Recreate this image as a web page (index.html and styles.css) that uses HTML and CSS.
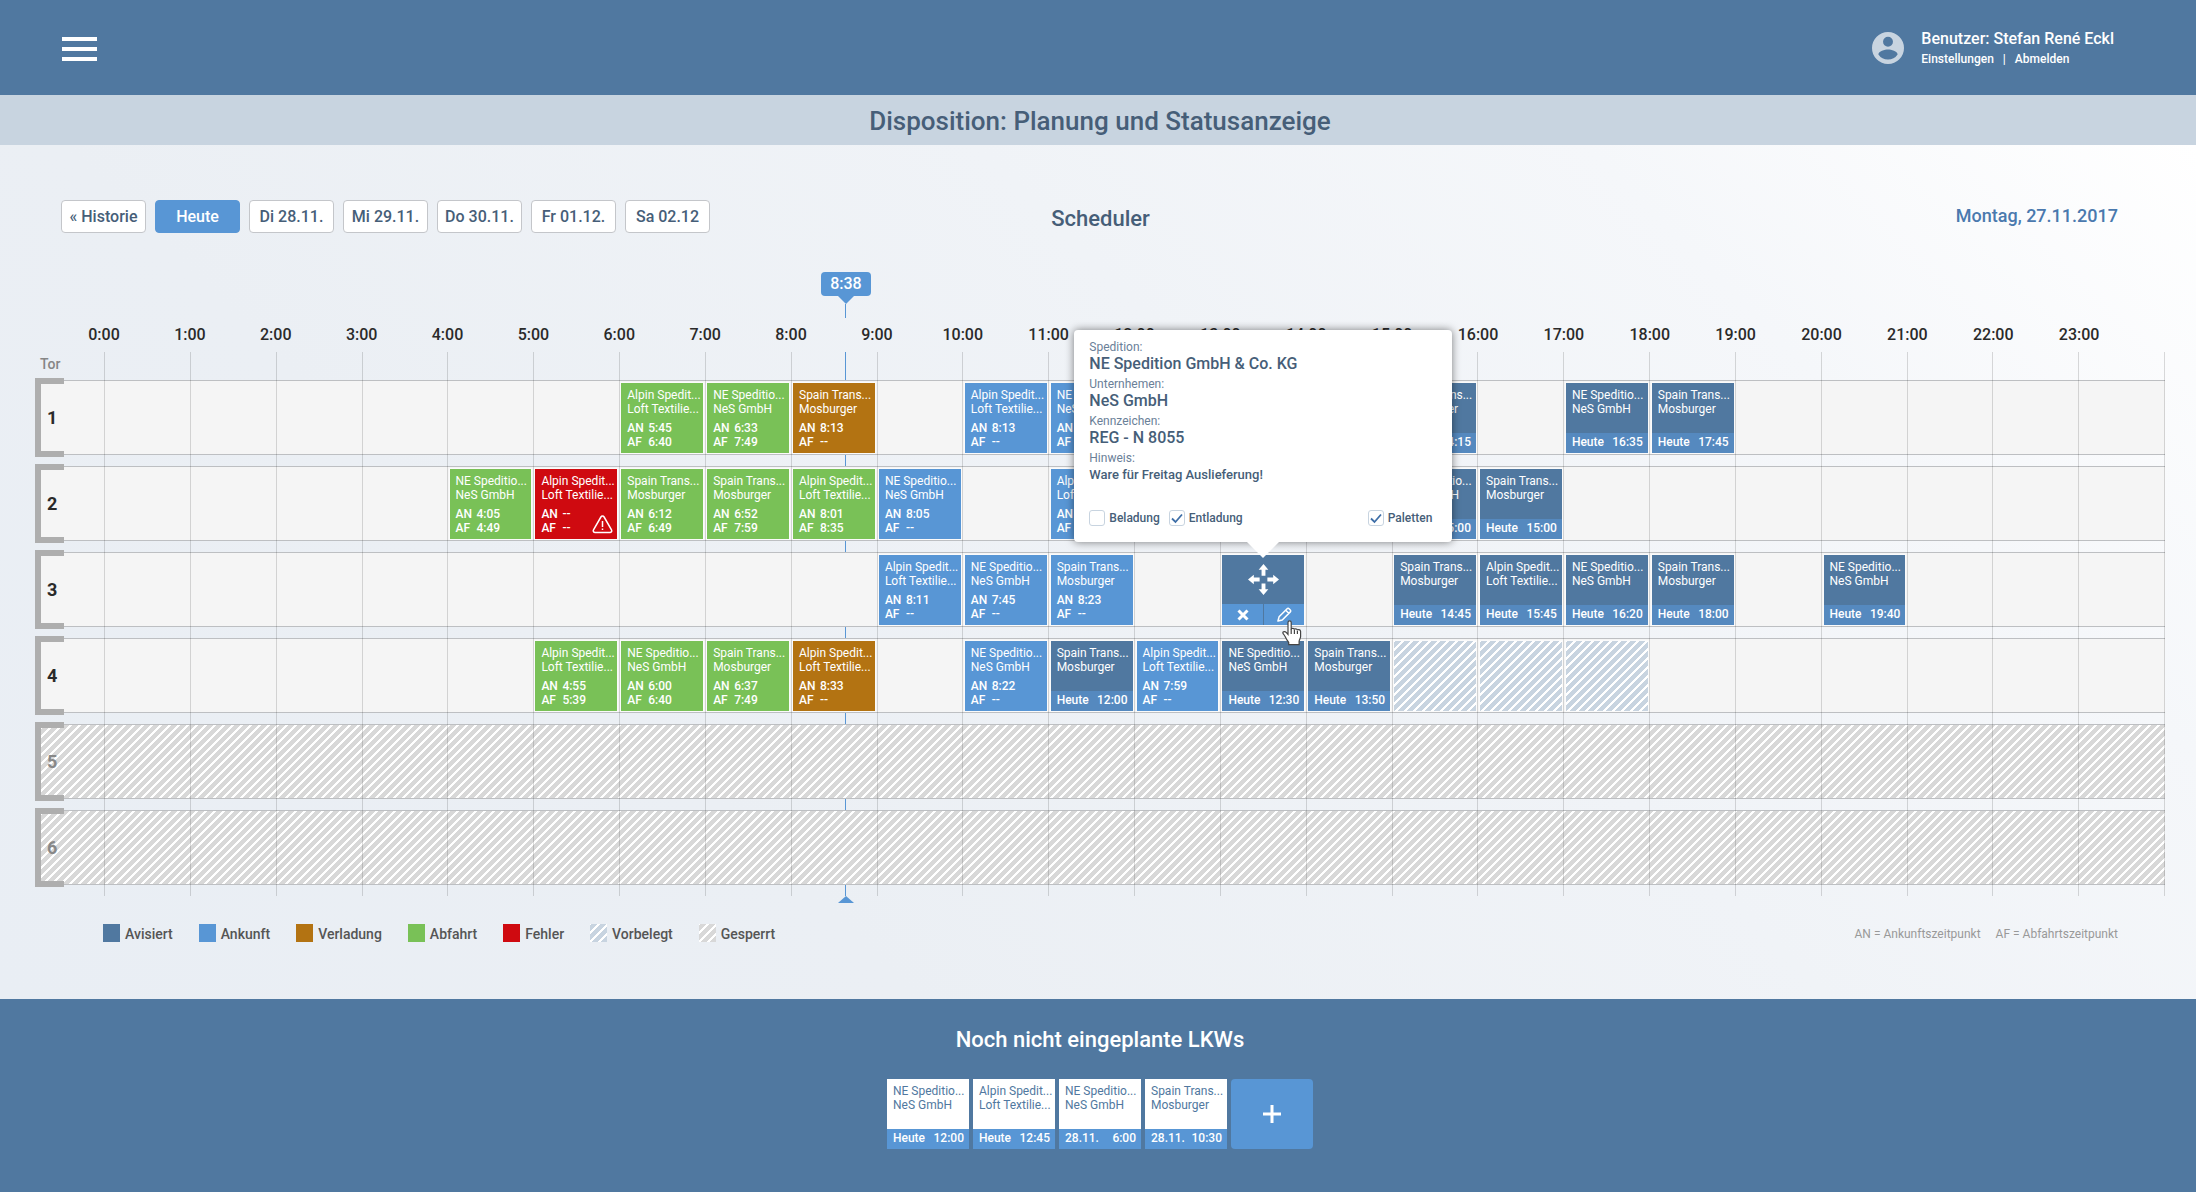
FILE: index.html
```html
<!DOCTYPE html>
<html lang="de">
<head>
<meta charset="utf-8">
<title>Disposition: Planung und Statusanzeige</title>
<meta name="viewport" content="width=device-width, initial-scale=1">
<link rel="stylesheet" href="styles.css">
</head>
<body>
<header class="topbar">
  <button class="menu" type="button" aria-label="Menü"><span></span><span></span><span></span></button>
  <div class="user">
    <svg class="user-icon" viewBox="2 2 20 20" aria-hidden="true"><path fill-rule="evenodd" d="M12 2a10 10 0 1 0 0 20 10 10 0 0 0 0-20zm0 3a3.1 3.1 0 1 1 0 6.200 3.100 3.100 0 0 1 0-6.200zm0 14.200a7.200 7.200 0 0 1-6-3.200c.03-1.990 4-3.080 6-3.080s5.970 1.090 6 3.080a7.200 7.200 0 0 1-6 3.200z"/></svg>
    <div>
      <p class="user-name">Benutzer: Stefan René Eckl</p>
      <p class="user-links"><a href="#einstellungen">Einstellungen</a><span>|</span><a href="#abmelden">Abmelden</a></p>
    </div>
  </div>
</header>

<div class="titlebar"><h1>Disposition: Planung und Statusanzeige</h1></div>

<main>
  <div class="toolbar">
    <nav class="days" aria-label="Tage">
      <button type="button">« Historie</button>
      <button type="button" class="active">Heute</button>
      <button type="button">Di 28.11.</button>
      <button type="button">Mi 29.11.</button>
      <button type="button">Do 30.11.</button>
      <button type="button">Fr 01.12.</button>
      <button type="button">Sa 02.12</button>
    </nav>
    <h2>Scheduler</h2>
    <p class="date">Montag, 27.11.2017</p>
  </div>

  <section class="board">
    <div class="hours">
      <span>0:00</span><span>1:00</span><span>2:00</span><span>3:00</span><span>4:00</span><span>5:00</span><span>6:00</span><span>7:00</span><span>8:00</span><span>9:00</span><span>10:00</span><span>11:00</span><span>12:00</span><span>13:00</span><span>14:00</span><span>15:00</span><span>16:00</span><span>17:00</span><span>18:00</span><span>19:00</span><span>20:00</span><span>21:00</span><span>22:00</span><span>23:00</span>
    </div>
    <p class="gate-head">Tor</p>
    <div class="lines" aria-hidden="true"><i></i><i></i><i></i><i></i><i></i><i></i><i></i><i></i><i></i><i></i><i></i><i></i><i></i><i></i><i></i><i></i><i></i><i></i><i></i><i></i><i></i><i></i><i></i><i></i></div>
    <div class="track">
      <div class="now" style="left: 36%"><b>8:38</b><i class="down"></i><i class="stem"></i><i class="shaft"></i><i class="up"></i></div>
    </div>

    <div class="lanes">
      <div class="lane">
        <strong class="gate">1</strong>
        <div class="slots">
          <article class="card left" style="--h:6"><p>Alpin Spedit...</p><p>Loft Textilie...</p><dl><dt>AN</dt><dd>5:45</dd><dt>AF</dt><dd>6:40</dd></dl></article>
          <article class="card left" style="--h:7"><p>NE Speditio...</p><p>NeS GmbH</p><dl><dt>AN</dt><dd>6:33</dd><dt>AF</dt><dd>7:49</dd></dl></article>
          <article class="card loading" style="--h:8"><p>Spain Trans...</p><p>Mosburger</p><dl><dt>AN</dt><dd>8:13</dd><dt>AF</dt><dd>--</dd></dl></article>
          <article class="card arrived" style="--h:10"><p>Alpin Spedit...</p><p>Loft Textilie...</p><dl><dt>AN</dt><dd>8:13</dd><dt>AF</dt><dd>--</dd></dl></article>
          <article class="card arrived" style="--h:11"><p>NE Speditio...</p><p>NeS GmbH</p><dl><dt>AN</dt><dd>8:20</dd><dt>AF</dt><dd>--</dd></dl></article>
          <article class="card" style="--h:15"><p>Spain Trans...</p><p>Mosburger</p><footer><span>Heute</span><span>14:15</span></footer></article>
          <article class="card" style="--h:17"><p>NE Speditio...</p><p>NeS GmbH</p><footer><span>Heute</span><span>16:35</span></footer></article>
          <article class="card" style="--h:18"><p>Spain Trans...</p><p>Mosburger</p><footer><span>Heute</span><span>17:45</span></footer></article>
        </div>
      </div>

      <div class="lane">
        <strong class="gate">2</strong>
        <div class="slots">
          <article class="card left" style="--h:4"><p>NE Speditio...</p><p>NeS GmbH</p><dl><dt>AN</dt><dd>4:05</dd><dt>AF</dt><dd>4:49</dd></dl></article>
          <article class="card error" style="--h:5"><p>Alpin Spedit...</p><p>Loft Textilie...</p><dl><dt>AN</dt><dd>--</dd><dt>AF</dt><dd>--</dd></dl>
            <svg class="warn" viewBox="0 0 21 19" aria-label="Fehler"><path d="M8.900 2a1.900 1.900 0 0 1 3.200 0l7.400 12.800c.8 1.400-.1 2.700-1.600 2.700H3.100c-1.500 0-2.400-1.300-1.600-2.700z"/><path d="M10.500 6v6M10.500 13.400v1.600"/></svg></article>
          <article class="card left" style="--h:6"><p>Spain Trans...</p><p>Mosburger</p><dl><dt>AN</dt><dd>6:12</dd><dt>AF</dt><dd>6:49</dd></dl></article>
          <article class="card left" style="--h:7"><p>Spain Trans...</p><p>Mosburger</p><dl><dt>AN</dt><dd>6:52</dd><dt>AF</dt><dd>7:59</dd></dl></article>
          <article class="card left" style="--h:8"><p>Alpin Spedit...</p><p>Loft Textilie...</p><dl><dt>AN</dt><dd>8:01</dd><dt>AF</dt><dd>8:35</dd></dl></article>
          <article class="card arrived" style="--h:9"><p>NE Speditio...</p><p>NeS GmbH</p><dl><dt>AN</dt><dd>8:05</dd><dt>AF</dt><dd>--</dd></dl></article>
          <article class="card arrived" style="--h:11"><p>Alpin Spedit...</p><p>Loft Textilie...</p><dl><dt>AN</dt><dd>8:10</dd><dt>AF</dt><dd>--</dd></dl></article>
          <article class="card" style="--h:15"><p>NE Speditio...</p><p>NeS GmbH</p><footer><span>Heute</span><span>15:00</span></footer></article>
          <article class="card" style="--h:16"><p>Spain Trans...</p><p>Mosburger</p><footer><span>Heute</span><span>15:00</span></footer></article>
        </div>
      </div>

      <div class="lane">
        <strong class="gate">3</strong>
        <div class="slots">
          <article class="card arrived" style="--h:9"><p>Alpin Spedit...</p><p>Loft Textilie...</p><dl><dt>AN</dt><dd>8:11</dd><dt>AF</dt><dd>--</dd></dl></article>
          <article class="card arrived" style="--h:10"><p>NE Speditio...</p><p>NeS GmbH</p><dl><dt>AN</dt><dd>7:45</dd><dt>AF</dt><dd>--</dd></dl></article>
          <article class="card arrived" style="--h:11"><p>Spain Trans...</p><p>Mosburger</p><dl><dt>AN</dt><dd>8:23</dd><dt>AF</dt><dd>--</dd></dl></article>
          <article class="card selected" style="--h:13">
            <button class="move" type="button" aria-label="Verschieben"><svg viewBox="0 0 32 32"><path d="M16 0l5 6h-3v6h-4V6h-3zM16 32l5-6h-3v-6h-4v6h-3zM0 16l6-5v3h6v4H6v3zM32 16l-6-5v3h-6v4h6v3z"/></svg></button>
            <div class="actions">
              <button type="button" aria-label="Löschen"><svg class="cross" viewBox="0 0 12 12"><path d="M1.500 1.500l9 9M10.500 1.500l-9 9"/></svg></button>
              <button type="button" aria-label="Bearbeiten"><svg class="pencil" viewBox="0 0 16 16"><path d="M1 15l1.200-4.500 8.600-8.700a1.400 1.400 0 0 1 2 0l1.400 1.400a1.400 1.400 0 0 1 0 2L5.600 13.800zM9.300 3.400l3.300 3.300"/></svg></button>
            </div>
            <svg class="cursor" viewBox="0 0 21 26" aria-hidden="true"><path d="M6 2.500C6 .3 9.200.3 9.200 2.500v7c0-1.600 3.200-1.600 3.200.3 0-1.400 3-1.200 3 .7 0-1.300 3.200-1.300 3.200 1v5.200c0 1.600-1.500 3-1.500 4.800v3.200H6.700v-2.200c-1.400-1.700-2.700-4-4-6.700-.4-1-1.900-1.800-1.900-3 0-1.500 2.300-1.700 3.400-.4L6 14.500z"/><path d="M9.200 9v5M12.400 10v4M15.400 11v3"/></svg>
            <form class="popover">
              <dl>
                <dt>Spedition:</dt><dd>NE Spedition GmbH &amp; Co. KG</dd>
                <dt>Unternhemen:</dt><dd>NeS GmbH</dd>
                <dt>Kennzeichen:</dt><dd>REG - N 8055</dd>
                <dt>Hinweis:</dt><dd class="note">Ware für Freitag Auslieferung!</dd>
              </dl>
              <div class="checks">
                <label><input type="checkbox">Beladung</label>
                <label><input type="checkbox" checked>Entladung</label>
                <label class="end"><input type="checkbox" checked>Paletten</label>
              </div>
            </form>
          </article>
          <article class="card" style="--h:15"><p>Spain Trans...</p><p>Mosburger</p><footer><span>Heute</span><span>14:45</span></footer></article>
          <article class="card" style="--h:16"><p>Alpin Spedit...</p><p>Loft Textilie...</p><footer><span>Heute</span><span>15:45</span></footer></article>
          <article class="card" style="--h:17"><p>NE Speditio...</p><p>NeS GmbH</p><footer><span>Heute</span><span>16:20</span></footer></article>
          <article class="card" style="--h:18"><p>Spain Trans...</p><p>Mosburger</p><footer><span>Heute</span><span>18:00</span></footer></article>
          <article class="card" style="--h:20"><p>NE Speditio...</p><p>NeS GmbH</p><footer><span>Heute</span><span>19:40</span></footer></article>
        </div>
      </div>

      <div class="lane">
        <strong class="gate">4</strong>
        <div class="slots">
          <article class="card left" style="--h:5"><p>Alpin Spedit...</p><p>Loft Textilie...</p><dl><dt>AN</dt><dd>4:55</dd><dt>AF</dt><dd>5:39</dd></dl></article>
          <article class="card left" style="--h:6"><p>NE Speditio...</p><p>NeS GmbH</p><dl><dt>AN</dt><dd>6:00</dd><dt>AF</dt><dd>6:40</dd></dl></article>
          <article class="card left" style="--h:7"><p>Spain Trans...</p><p>Mosburger</p><dl><dt>AN</dt><dd>6:37</dd><dt>AF</dt><dd>7:49</dd></dl></article>
          <article class="card loading" style="--h:8"><p>Alpin Spedit...</p><p>Loft Textilie...</p><dl><dt>AN</dt><dd>8:33</dd><dt>AF</dt><dd>--</dd></dl></article>
          <article class="card arrived" style="--h:10"><p>NE Speditio...</p><p>NeS GmbH</p><dl><dt>AN</dt><dd>8:22</dd><dt>AF</dt><dd>--</dd></dl></article>
          <article class="card" style="--h:11"><p>Spain Trans...</p><p>Mosburger</p><footer><span>Heute</span><span>12:00</span></footer></article>
          <article class="card arrived" style="--h:12"><p>Alpin Spedit...</p><p>Loft Textilie...</p><dl><dt>AN</dt><dd>7:59</dd><dt>AF</dt><dd>--</dd></dl></article>
          <article class="card" style="--h:13"><p>NE Speditio...</p><p>NeS GmbH</p><footer><span>Heute</span><span>12:30</span></footer></article>
          <article class="card" style="--h:14"><p>Spain Trans...</p><p>Mosburger</p><footer><span>Heute</span><span>13:50</span></footer></article>
          <div class="card reserved" style="--h:15"></div>
          <div class="card reserved" style="--h:16"></div>
          <div class="card reserved" style="--h:17"></div>
        </div>
      </div>

      <div class="lane locked"><strong class="gate">5</strong><div class="slots"></div></div>
      <div class="lane locked"><strong class="gate">6</strong><div class="slots"></div></div>
    </div>
  </section>

  <div class="legend">
    <ul>
      <li><i class="swatch"></i>Avisiert</li>
      <li><i class="swatch arrived"></i>Ankunft</li>
      <li><i class="swatch loading"></i>Verladung</li>
      <li><i class="swatch left"></i>Abfahrt</li>
      <li><i class="swatch error"></i>Fehler</li>
      <li><i class="swatch reserved"></i>Vorbelegt</li>
      <li><i class="swatch blocked"></i>Gesperrt</li>
    </ul>
    <p><span>AN = Ankunftszeitpunkt</span><span>AF = Abfahrtszeitpunkt</span></p>
  </div>
</main>

<section class="pool">
  <h2>Noch nicht eingeplante LKWs</h2>
  <div class="pool-cards">
    <article class="card open"><p>NE Speditio...</p><p>NeS GmbH</p><footer><span>Heute</span><span>12:00</span></footer></article>
    <article class="card open"><p>Alpin Spedit...</p><p>Loft Textilie...</p><footer><span>Heute</span><span>12:45</span></footer></article>
    <article class="card open"><p>NE Speditio...</p><p>NeS GmbH</p><footer><span>28.11.</span><span>6:00</span></footer></article>
    <article class="card open"><p>Spain Trans...</p><p>Mosburger</p><footer><span>28.11.</span><span>10:30</span></footer></article>
    <button class="add" type="button" aria-label="LKW hinzufügen"><svg viewBox="0 0 18 18"><path d="M9 0v18M0 9h18"/></svg></button>
  </div>
</section>
</body>
</html>
```
FILE: styles.css
```css
:root {
  --blue: #5078a0;
  --bright: #5896d5;
  --mid: #5589bf;
  --ink: #465e78;
  --grey: #aeaeae;
  --edge-left: 35px;
  --edge-right: 31px;
  --text: Roboto, "Liberation Sans", sans-serif;
}

* { box-sizing: border-box; }

body {
  margin: 0;
  min-height: 100vh;
  display: flex;
  flex-direction: column;
  font: 500 12px/14px var(--text);
  color: var(--ink);
}

h1, h2, p, dl, dd, ul { margin: 0; padding: 0; }
h1, h2 { font-weight: 500; }
ul { list-style: none; }
a { color: inherit; text-decoration: none; }
button { border: 0; padding: 0; font: inherit; color: inherit; cursor: pointer; }

/* top bar */
.topbar {
  display: flex;
  align-items: center;
  justify-content: space-between;
  padding: 28px 82px 27px 62px;
  background: var(--blue);
  color: #fff;
}
.menu { width: 35px; display: grid; gap: 6px; padding-top: 1px; background: none; }
.menu span { height: 4px; background: #fff; }
.user { display: flex; align-items: center; gap: 17px; }
.user-icon { width: 32px; height: 32px; fill: #c8d4e0; }
.user-name { font-size: 16px; line-height: 22px; }
.user-links { display: flex; gap: 9px; line-height: 18px; }

.titlebar {
  padding: 10px var(--edge-right) 8px var(--edge-left);
  background: #c8d4e0;
  text-align: center;
}
.titlebar h1 { font-size: 26px; line-height: 32px; }

main {
  flex: 1;
  padding: 55px var(--edge-right) 0 var(--edge-left);
  background: linear-gradient(45deg, #e9eef4 0%, #ebeff4 30%, #f0f3f7 60%, #f5f7fa 80%, #fff 100%);
}

/* day selection */
.toolbar {
  display: grid;
  grid-template-columns: 1fr auto 1fr;
  align-items: center;
  padding: 0 47px 0 26px;
  margin: 0 0 39px;
}
.toolbar h2 { font-size: 22px; line-height: 24px; padding: 4px 0 0 22px; }
.days { display: flex; gap: 9px; }
.days button {
  width: 85px;
  height: 33px;
  padding-top: 1px;
  border: 1px solid #c4c6ca;
  border-radius: 4px;
  background: #fff;
  font-size: 16px;
  white-space: nowrap;
}
.days .active { background: var(--bright); border-color: var(--bright); color: #fff; }
.date { justify-self: end; padding-bottom: 2px; font-size: 18px; line-height: 20px; color: #4a79ae; }

/* schedule */
.board {
  isolation: isolate;
  display: grid;
  grid-template-columns: 69px minmax(0, 1fr);
  grid-template-rows: 53px 20px 35px auto 11px;
}
.hours, .lines, .slots { display: grid; grid-template-columns: repeat(24, minmax(0, 1fr)); }
.hours { grid-area: 2 / 2; font-size: 16px; line-height: 20px; color: #2a2a2a; }
.hours span { width: 0; display: flex; justify-content: center; }
.gate-head { grid-area: 3 / 1; padding: 12px 5px 0; font-size: 14px; color: #868686; }
.lines { grid-area: 3 / 2 / 6; margin-top: 7px; z-index: 1; border-right: 1px solid rgba(0, 0, 0, .14); pointer-events: none; }
.lines i { border-left: 1px solid rgba(0, 0, 0, .14); }
.lanes { grid-area: 4 / 1 / 5 / 3; display: grid; gap: 11px; }

.lane {
  position: relative;
  display: grid;
  grid-template-columns: 69px minmax(0, 1fr);
  min-height: 75px;
  border: solid #bdbfc2;
  border-width: 1px 0;
  background: #f5f5f5;
}
.lane::before {
  content: "";
  position: absolute;
  inset: -3px auto -3px 0;
  width: 23px;
  border: 6px solid var(--grey);
  border-right: 0;
  z-index: 2;
}
.gate { align-self: center; padding: 1px 0 0 12px; font: 700 18px/22px var(--text); color: #2a2a2a; }
.slots { padding: 2px 0 1px; }

/* where the current time falls */
.track { grid-area: 1 / 2 / 6; position: relative; z-index: -1; }
.now {
  position: absolute;
  top: 0;
  bottom: -7px;
  width: 50px;
  margin-left: -25px;
  display: flex;
  flex-direction: column;
  align-items: center;
}
.now b { width: 50px; border-radius: 4px; background: var(--bright); color: #fff; font: 500 16px/24px var(--text); text-align: center; }
.now .down { border: 8px solid transparent; border-top-color: var(--bright); border-bottom: 0; }
.now .up { border: 8px solid transparent; border-bottom: 7px solid var(--bright); border-top: 0; }
.now .stem, .now .shaft { width: 1px; background: var(--bright); }
.now .stem { height: 14px; margin-bottom: 34px; }
.now .shaft { flex: 1; }

/* appointments */
.card {
  grid-row: 1;
  grid-column: calc(var(--h) + 1);
  position: relative;
  z-index: 2;
  display: flex;
  flex-direction: column;
  height: 70px;
  margin: 0 2px;
  padding: 5px 0 0;
  background: var(--blue);
  box-shadow: 0 0 0 1px rgba(255, 255, 255, .6);
  color: #fff;
  white-space: nowrap;
}
.card p { padding-left: 6px; font-weight: 400; }
.card dl { display: grid; grid-template-columns: 21px auto; justify-content: start; padding: 5px 5px 0 6px; }
.card footer {
  display: flex;
  justify-content: space-between;
  margin-top: auto;
  padding: 0 5px 1px 6px;
  background: var(--mid);
  line-height: 19px;
}
.arrived { background: var(--bright); }
.left { background: #79c157; }
.loading { background: #b37312; }
.error { background: #cf0a10; }
.reserved, .blocked, .locked {
  background-image: linear-gradient(135deg, #fff 0 6%, transparent 6% 44%, #fff 44% 56%, transparent 56% 94%, #fff 94%);
  background-size: 9px 9px;
}
.reserved { background-color: #c8d4e0; }
.blocked, .locked { background-color: #d8d8d8; }
.locked .gate { color: #888; }

.warn {
  position: absolute;
  right: 4px;
  bottom: 5px;
  width: 21px;
  height: 19px;
  fill: none;
  stroke: #fff;
  stroke-width: 1.500;
}

/* selected appointment */
.selected { z-index: 3; padding: 0; }
.move { flex: 1; display: grid; place-items: center; background: none; }
.move svg { width: 31px; height: 31px; fill: #fff; }
.actions { display: grid; grid-template-columns: 1fr 1fr; gap: 1px; }
.actions button { height: 21px; display: grid; place-items: center; background: var(--bright); }
.actions svg { fill: none; stroke: #fff; }
.cross { width: 12px; height: 12px; stroke-width: 3; }
.pencil { width: 15px; height: 15px; stroke-width: 1.600; stroke-linejoin: round; }
.cursor { position: absolute; left: 60px; top: 65px; width: 21px; height: 26px; fill: #fff; stroke: #444; stroke-width: 1.200; }

.popover {
  position: absolute;
  bottom: calc(100% + 13px);
  left: 50%;
  width: 378px;
  margin-left: -189px;
  padding: 10px 20px 16px 15px;
  border-radius: 4px;
  background: #fff;
  box-shadow: 0 0 8px rgba(0, 0, 0, .5);
  color: var(--ink);
}
.popover::after {
  content: "";
  position: absolute;
  left: 50%;
  top: 100%;
  margin-left: -16px;
  border: 16px solid transparent;
  border-top-color: #fff;
  border-bottom: 0;
}
.popover dl { display: block; padding: 0; }
.popover dt { font-weight: 400; line-height: 15px; color: #6a8098; }
.popover dd { margin-bottom: 5px; font-size: 16px; line-height: 17px; }
.popover .note { font-size: 13px; }
.checks { display: flex; gap: 9px; margin-top: 27px; }
.checks label { display: flex; align-items: center; gap: 4px; }
.checks .end { margin-left: auto; }
.checks input {
  appearance: none;
  width: 16px;
  height: 16px;
  margin: 0;
  border: 1px solid #c8d4e0;
  border-radius: 3px;
  background: #fff;
}
.checks input:checked {
  background: url("data:image/svg+xml,%3Csvg xmlns='http://www.w3.org/2000/svg' viewBox='0 0 14 14'%3E%3Cpath d='M2 7.500l3.500 3.500L12 3.500' fill='none' stroke='%233f6fa8' stroke-width='1.800'/%3E%3C/svg%3E") center / 14px no-repeat;
}

/* legend */
.legend {
  display: flex;
  justify-content: space-between;
  align-items: center;
  padding: 28px 47px 55px 68px;
}
.legend ul { display: flex; gap: 26px; font-size: 14px; line-height: 20px; color: #555; }
.legend li { display: flex; gap: 5px; }
.swatch { width: 17px; height: 18px; }
.swatch:not([class*=" "]) { background: var(--blue); }
.legend p { display: flex; gap: 15px; font-weight: 400; color: #999; }

/* unplanned trucks */
.pool {
  padding: 28px var(--edge-right) 43px var(--edge-left);
  background: var(--blue);
  color: #fff;
  text-align: center;
}
.pool h2 { font-size: 22px; line-height: 26px; margin-bottom: 26px; }
.pool-cards { display: flex; justify-content: center; gap: 4px; text-align: left; }
.open { width: 82px; margin: 0; background: #fff; color: var(--blue); box-shadow: none; }
.open footer { background: var(--bright); color: #fff; }
.add { width: 82px; border-radius: 4px; background: var(--bright); display: grid; place-items: center; }
.add svg { width: 18px; height: 18px; stroke: #fff; stroke-width: 3; }
```
